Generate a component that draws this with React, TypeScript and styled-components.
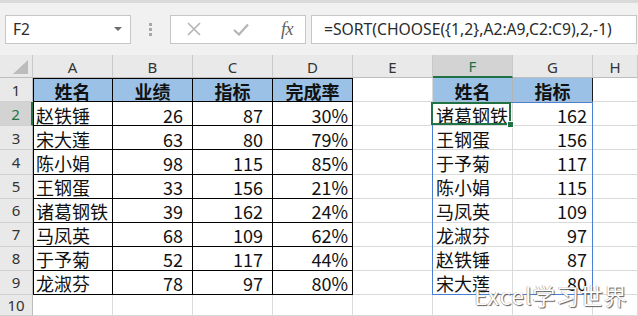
import styled, { createGlobalStyle } from "styled-components";

const GREEN = "#217346";

type Row = {
  name: string;
  score: number;
  target: number;
  rate: string;
  sortedName: string;
  sortedTarget: number;
};

const rows: Row[] = [
  { name: "赵铁锤", score: 26, target: 87, rate: "30%", sortedName: "诸葛钢铁", sortedTarget: 162 },
  { name: "宋大莲", score: 63, target: 80, rate: "79%", sortedName: "王钢蛋", sortedTarget: 156 },
  { name: "陈小娟", score: 98, target: 115, rate: "85%", sortedName: "于予菊", sortedTarget: 117 },
  { name: "王钢蛋", score: 33, target: 156, rate: "21%", sortedName: "陈小娟", sortedTarget: 115 },
  { name: "诸葛钢铁", score: 39, target: 162, rate: "24%", sortedName: "马凤英", sortedTarget: 109 },
  { name: "马凤英", score: 68, target: 109, rate: "62%", sortedName: "龙淑芬", sortedTarget: 97 },
  { name: "于予菊", score: 52, target: 117, rate: "44%", sortedName: "赵铁锤", sortedTarget: 87 },
  { name: "龙淑芬", score: 78, target: 97, rate: "80%", sortedName: "宋大莲", sortedTarget: 80 },
];

const columns = ["A", "B", "C", "D", "E", "F", "G", "H"];

const GlobalStyle = createGlobalStyle`
  body {
    margin: 0;
    background: #ffffff;
    overflow: hidden;
  }
`;

const Window = styled.div`
  width: 638px;
  height: 316px;
  overflow: hidden;
  display: flex;
  flex-direction: column;
  background: #ffffff;
`;

const TopStrip = styled.div`
  height: 3px;
  background: #dadada;
`;

const FormulaBar = styled.div`
  height: 53px;
  box-sizing: border-box;
  padding: 12px 0 0 5px;
  background: #f1f1f1;
  display: flex;
  align-items: flex-start;
`;

const Box = styled.div`
  height: 29px;
  box-sizing: border-box;
  background: #ffffff;
  border: 1px solid #c6c6c6;
  display: flex;
  align-items: center;
`;

const NameBox = styled(Box)`
  width: 126px;
  padding: 0 8px 0 7px;
  justify-content: space-between;
  font-family: "Noto Sans", "Liberation Sans", sans-serif;
  font-size: 15.5px;
  color: #2b2b2b;
`;

const Caret = styled.span`
  width: 0;
  height: 0;
  border-left: 4px solid transparent;
  border-right: 4px solid transparent;
  border-top: 4px solid #6d6d6d;
`;

const Grip = styled.div`
  width: 39px;
  height: 29px;
  display: flex;
  flex-direction: column;
  align-items: center;
  justify-content: center;
  gap: 2px;

  span {
    width: 3px;
    height: 3px;
    background: #a8a8a8;
  }
`;

const ActionBox = styled(Box)`
  width: 136px;
  padding: 0 12px 0 16px;
  justify-content: space-between;
`;

const Fx = styled.span`
  font-family: "Liberation Serif", serif;
  font-style: italic;
  font-size: 18px;
  color: #5f5f5f;
  letter-spacing: -0.5px;
`;

const FormulaInput = styled(Box)`
  flex: 1;
  margin: 0 1px 0 5px;
  padding-left: 12px;
  font-family: "Noto Sans", "Liberation Sans", sans-serif;
  font-size: 15.7px;
  color: #2b2b2b;
  white-space: nowrap;
`;

const SheetArea = styled.div`
  position: relative;
  flex: 1;
  display: grid;
  grid-template-columns: 33px repeat(7, 80px) 1fr;
  grid-template-rows: 23px repeat(9, 24.1px) 1fr;
`;

const Corner = styled.div`
  background: #e9e9e9;
  border-right: 1px solid #c8c8c8;
  border-bottom: 1px solid #bdbdbd;
  position: relative;
  box-sizing: border-box;

  &::after {
    content: "";
    position: absolute;
    right: 4px;
    bottom: 3px;
    width: 0;
    height: 0;
    border-left: 15px solid transparent;
    border-bottom: 14px solid #bcbcbc;
  }
`;

const ColHead = styled.div<{ $active?: boolean }>`
  box-sizing: border-box;
  display: flex;
  align-items: center;
  justify-content: center;
  background: ${(p) => (p.$active ? "#d3d3d3" : "#e9e9e9")};
  color: ${(p) => (p.$active ? GREEN : "#333333")};
  border-right: 1px solid #c8c8c8;
  border-bottom: ${(p) => (p.$active ? `2px solid ${GREEN}` : "1px solid #bdbdbd")};
  font-family: "Noto Sans", "Liberation Sans", sans-serif;
  font-size: 15px;
  padding-top: 1px;
`;

const RowHead = styled.div<{ $active?: boolean }>`
  box-sizing: border-box;
  display: flex;
  align-items: center;
  justify-content: center;
  background: ${(p) => (p.$active ? "#d3d3d3" : "#e9e9e9")};
  color: ${(p) => (p.$active ? GREEN : "#333333")};
  border-right: ${(p) => (p.$active ? `2px solid ${GREEN}` : "1px solid #bdbdbd")};
  border-bottom: 1px solid #d0d0d0;
  font-family: "Noto Sans", "Liberation Sans", sans-serif;
  font-size: 15px;
`;

type CellProps = {
  $align?: "left" | "right" | "center";
  $pad?: number;
  $fill?: boolean;
  $bold?: boolean;
  $boxed?: boolean;
  $edgeLeft?: boolean;
  $edgeTop?: boolean;
  $rightLine?: string;
};

const Cell = styled.div<CellProps>`
  box-sizing: border-box;
  display: flex;
  align-items: center;
  justify-content: ${(p) =>
    p.$align === "right" ? "flex-end" : p.$align === "center" ? "center" : "flex-start"};
  padding: 2px ${(p) => (p.$align === "right" ? p.$pad ?? 5 : 0)}px 0
    ${(p) => (p.$align === "left" ? 3 : 0)}px;
  background: ${(p) => (p.$fill ? "#9bc2e6" : "#ffffff")};
  border-right: 1px solid ${(p) => p.$rightLine ?? (p.$boxed ? "#000000" : "#d9d9d9")};
  border-bottom: 1px solid ${(p) => (p.$boxed ? "#000000" : p.$fill ? "#a9bfd6" : "#d9d9d9")};
  box-shadow: ${(p) =>
    [p.$edgeLeft ? "inset 1px 0 0 #000" : "", p.$edgeTop ? "inset 0 1px 0 #000" : ""]
      .filter(Boolean)
      .join(", ") || "none"};
  font-family: "Noto Sans CJK SC", "Noto Sans", sans-serif;
  font-size: 18px;
  font-weight: ${(p) => (p.$bold ? 700 : 400)};
  color: #111111;
  white-space: nowrap;
  overflow: visible;
  line-height: 1;
`;

const SpillFrame = styled.div`
  position: absolute;
  left: 432px;
  top: 47px;
  width: 161px;
  height: 193px;
  box-sizing: border-box;
  border: 1px solid #4a7fd4;
  pointer-events: none;
`;

const Selection = styled.div`
  position: absolute;
  left: 431px;
  top: 46.5px;
  width: 80px;
  height: 23px;
  box-sizing: border-box;
  border: 2px solid ${GREEN};
  pointer-events: none;

  &::after {
    content: "";
    position: absolute;
    right: -5px;
    bottom: -5px;
    width: 5px;
    height: 5px;
    background: ${GREEN};
    border: 1px solid #ffffff;
  }
`;

const Watermark = styled.div`
  position: absolute;
  left: 474px;
  top: 223px;
  font-family: "Noto Sans CJK SC", "Noto Sans", sans-serif;
  font-size: 23px;
  color: #ffffff;
  letter-spacing: 0.8px;
  text-shadow: 1px 1px 1px #5e5e5e, -0.5px -0.5px 0 #9a9a9a;
  white-space: nowrap;
  pointer-events: none;
`;

function XIcon() {
  return (
    <svg width="14" height="14" viewBox="0 0 14 14">
      <path d="M1 1 L13 13 M13 1 L1 13" stroke="#b4b4b4" strokeWidth="1.6" />
    </svg>
  );
}

function CheckIcon() {
  return (
    <svg width="16" height="13" viewBox="0 0 16 13">
      <path d="M1 7 L6 11.5 L15 1.5" stroke="#b4b4b4" strokeWidth="2.2" fill="none" />
    </svg>
  );
}

function RowGroup({ row, index }: { row: Row; index: number }) {
  return (
    <>
      <RowHead $active={index === 2}>{index}</RowHead>
      <Cell $align="left" $boxed $edgeLeft>{row.name}</Cell>
      <Cell $align="right" $pad={9} $boxed>{row.score}</Cell>
      <Cell $align="right" $pad={9} $boxed>{row.target}</Cell>
      <Cell $align="right" $pad={4} $boxed>{row.rate}</Cell>
      <Cell />
      <Cell $align="left">{row.sortedName}</Cell>
      <Cell $align="right" $pad={5}>{row.sortedTarget}</Cell>
      <Cell />
    </>
  );
}

export default function App() {
  return (
    <>
      <GlobalStyle />
      <Window>
        <TopStrip />
        <FormulaBar>
          <NameBox>
            F2
            <Caret />
          </NameBox>
          <Grip>
            <span />
            <span />
            <span />
          </Grip>
          <ActionBox>
            <XIcon />
            <CheckIcon />
            <Fx>fx</Fx>
          </ActionBox>
          <FormulaInput>=SORT(CHOOSE({"{1,2}"},A2:A9,C2:C9),2,-1)</FormulaInput>
        </FormulaBar>

        <SheetArea>
          <Corner />
          {columns.map((c) => (
            <ColHead key={c} $active={c === "F"}>
              {c}
            </ColHead>
          ))}

          <RowHead>1</RowHead>
          <Cell $align="center" $fill $bold $boxed $edgeLeft $edgeTop>姓名</Cell>
          <Cell $align="center" $fill $bold $boxed $edgeTop>业绩</Cell>
          <Cell $align="center" $fill $bold $boxed $edgeTop>指标</Cell>
          <Cell $align="center" $fill $bold $boxed $edgeTop>完成率</Cell>
          <Cell />
          <Cell $align="center" $fill $bold $rightLine="#b4b4b4">姓名</Cell>
          <Cell $align="center" $fill $bold $rightLine="#1a1a1a">指标</Cell>
          <Cell />

          {rows.map((r, i) => (
            <RowGroup key={r.name} row={r} index={i + 2} />
          ))}

          <RowHead>10</RowHead>
          {columns.map((c) => (
            <Cell key={c} />
          ))}

          <SpillFrame />
          <Selection />
          <Watermark>Excel学习世界</Watermark>
        </SheetArea>
      </Window>
    </>
  );
}
